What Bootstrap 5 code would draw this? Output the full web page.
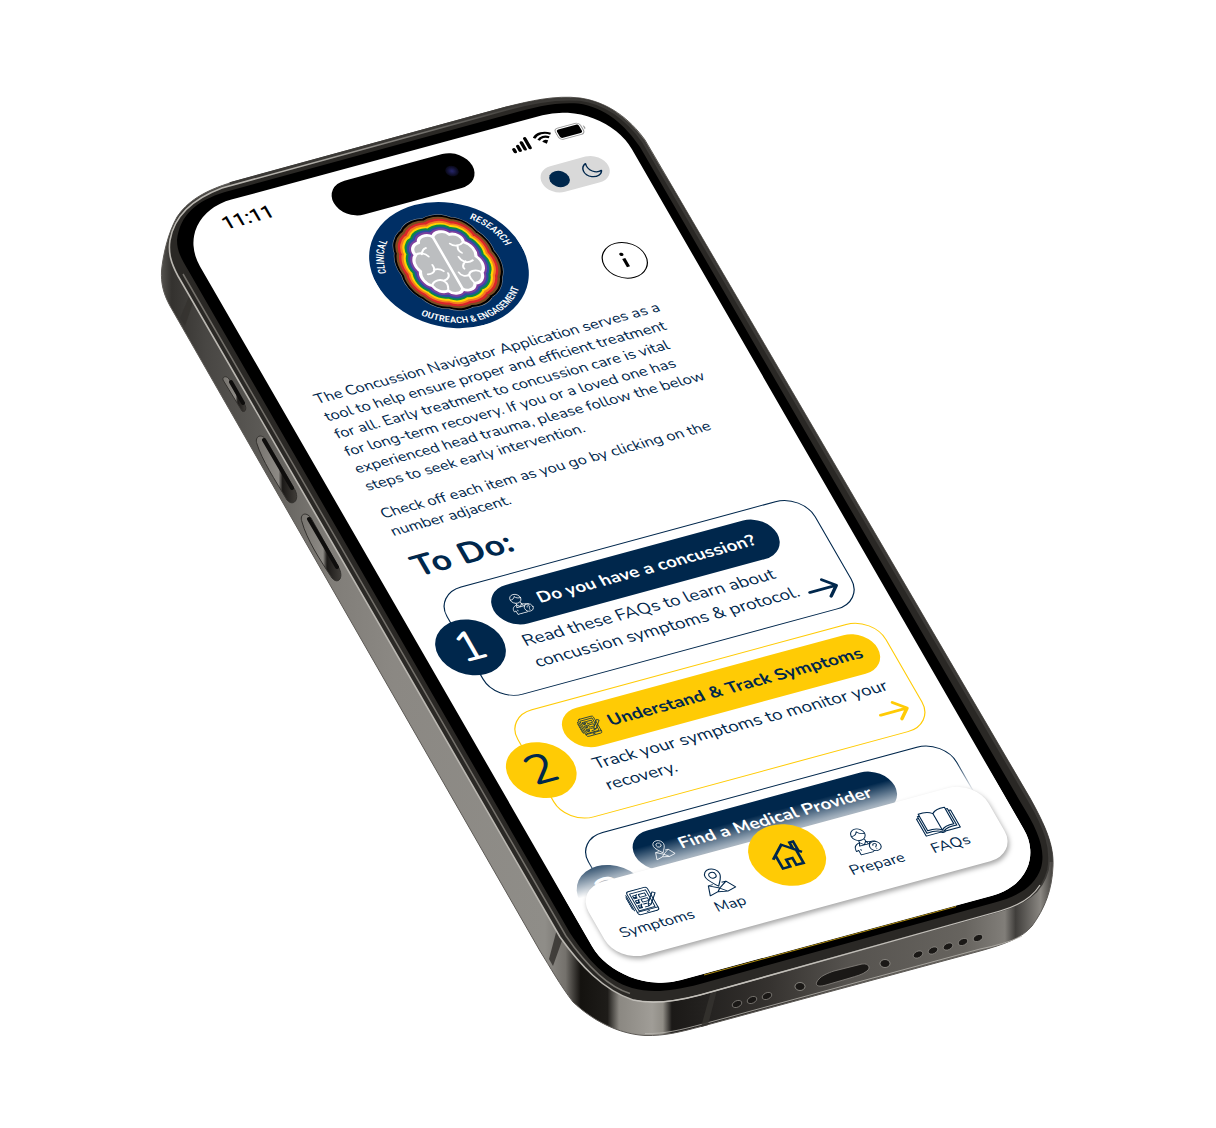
<!DOCTYPE html>
<html lang="en">
<head>
<meta charset="utf-8">
<meta name="viewport" content="width=device-width, initial-scale=1">
<title>Concussion Navigator</title>
<link href="https://cdn.jsdelivr.net/npm/bootstrap@5.3.0/dist/css/bootstrap.min.css" rel="stylesheet">
<style>
:root{--navy:#00274c;--maize:#ffcb05}
body{background:#fff;color:var(--navy);font-family:Nunito,Lato,"Open Sans",sans-serif}
.stage{position:relative;width:1216px;height:1128px;flex:none}
.handset{position:absolute;inset:0;width:100%;height:100%}
/* the display is laid out flat, then tilted onto the handset */
.display{position:absolute;left:0;top:0;width:393px;height:852px;border-radius:55px;background:#fff;overflow:hidden;
 transform-origin:0 0;transform:matrix(1.099,-.298,.528,.916,171,216)}
.display svg{display:block;flex:none}
.display a{color:inherit;text-decoration:none}
.statusbar,.masthead{display:grid;grid-template-columns:1fr 131px 1fr}
.statusbar{height:50px;padding-top:11px}
.clock{font:500 18px/20px Roboto,sans-serif;color:#000;padding-left:37px}
.island{width:126px;height:37px;border-radius:19px;background:#000}
.lens{width:11px;height:11px;border-radius:50%;background:radial-gradient(#26266b,#0c0c22 60%,#050508);margin-right:13px}
.status-icons{padding-right:26px;gap:3px}
.masthead{height:133px}
.modeswitch{width:60px;height:28px;border-radius:14px;background:#d9d9d9;padding:0 6px 0 7px;border:0}
.modeswitch i{width:17px;height:17px;border-radius:50%;background:var(--navy)}
.infobtn{width:38px;height:38px;border:1px solid #000;border-radius:50%;background:none;padding:0;margin-right:11px}
.side-tools{padding:0 26px 6px 0}
.intro{padding:18px 20px 0 30px;font-size:14px;line-height:19px;white-space:nowrap}
.intro p{margin:0 0 11px}
.todo-title{font-size:30px;line-height:40px;font-weight:700;margin:0 0 9px 31px}
.steps{padding:0 22px 0 35px;margin:0;list-style:none}
.step{position:relative;height:118px;border:1px solid var(--navy);border-radius:25px;padding:9px 0 0 39px;margin-bottom:16px;white-space:nowrap}
.step.alt{border-color:var(--maize)}
.pill{height:42px;border-radius:21px;background:var(--navy);padding:0 21px 0 14px;gap:6px;font-weight:700;font-size:16px}
.alt .pill{background:var(--maize);padding-right:14px}
.display .pill{color:#fff}.display .alt .pill{color:var(--navy)}
.step p{margin:5px 0 0 9px;font-size:16px;line-height:23px}
.tick{position:absolute;left:-25px;top:30px;width:58px;height:58px;border-radius:50%;border:0;padding:0;background:var(--navy);color:#fff;font-size:42px;line-height:58px;text-align:center}
.alt .tick{background:var(--maize);color:var(--navy)}
.go{position:absolute;right:12px;bottom:10px;color:var(--navy)}
.display .alt .go{color:var(--maize)}
.fade-veil{position:absolute;left:0;right:0;bottom:0;height:136px;background:linear-gradient(rgba(255,255,255,0),#fff 33px)}
.tabs{position:absolute;left:13px;right:16px;bottom:33px;height:80px;border-radius:25px;background:#fff;padding:0 15px;box-shadow:0 3px 5px rgba(0,0,0,.35);font-size:14px;line-height:18px}
.tabs a{flex:1 1 0;min-width:0;gap:3px;padding-bottom:17px}
.homebtn{width:64px;height:64px;border-radius:50%;background:var(--maize);margin:-26px 0 10px}
.tabs .homewrap{padding:0}
.seal text{font:500 9px "Liberation Sans Narrow","Roboto Condensed",Roboto,sans-serif;fill:#fff}
</style>
</head>
<body>
<svg width="0" height="0" class="position-absolute" aria-hidden="true">
 <symbol id="i-person" viewBox="0 0 24 26"><g fill="none" stroke="currentColor" stroke-width=".8" stroke-linejoin="round" stroke-linecap="round">
  <circle cx="10" cy="6.500" r="5.600"/><path d="M4.600 6.600C7 7 9 5.500 10 3.500C11 5.800 13 6.800 15.500 6.600M8 12V14L10.500 17L13 14V12M8 13.500L6.500 17L10.500 17L14 17L13 13.500M7 14C3.500 15 2 17 2 20V21L4 20.500V25H14.500M6 20V21M13 14L17 15.500"/><circle cx="18" cy="20.500" r="4.500"/><path d="M16.500 19.500C16.500 17.600 19.600 17.800 19.400 19.500C19.200 20.500 18 20.500 18 21.700M18 23.200V23.300M14.500 17.500C15 15.500 18 14.500 20 16.300"/></g></symbol>
 <symbol id="i-tablet" viewBox="0 0 26 26"><g fill="none" stroke="currentColor" stroke-width=".85" stroke-linejoin="round" stroke-linecap="round">
  <rect x="3" y="1" width="18" height="24" rx="2"/><path d="M5 3.500H19V21H5ZM3 22H21M11 23.500H13M1.500 4V20M.5 6V18"/><path d="M6.500 6H9V9H6.500ZM6.500 11H9V14H6.500ZM6.500 16H9V19H6.500ZM7 7.500L8 8.500L10 5.500M7 12.500L8 13.500L10 10.500M7 17.500L8 18.500L10 15.500M11.500 6H17V9H11.500ZM11.500 11H17V14H11.500ZM11.500 16H14M11.500 19H14"/><path d="M23 7L25 8.500L17 18L14.500 19L15 16.500ZM15 16.500L17 18"/></g></symbol>
 <symbol id="i-map" viewBox="0 0 28 28"><g fill="none" stroke="currentColor" stroke-width=".95" stroke-linejoin="round">
  <path d="M13 20C10 15.500 6.500 12 6.500 8A6.500 6.500 0 0 1 19.500 8C19.500 12 16 15.500 13 20Z"/><circle cx="13" cy="8" r="3"/><path d="M9 17H5L2 27L10 25L18 27L26 25L21 17H17M5 17L13 22L10 25M13 22L21 17M13 22L18 27"/></g></symbol>
 <symbol id="i-book" viewBox="0 0 32 26"><g fill="none" stroke="currentColor" stroke-width="1" stroke-linejoin="round">
  <path d="M16 5C13 2 9 1.500 4.500 2V19.500C9 19 13 19.500 16 22.500C19 19.500 23 19 27.500 19.500V2C23 1.500 19 2 16 5V22.500"/><path d="M4.500 4H2.800V21.500C8 21 12 21.500 15 23.500H17C20 21.500 24 21 29.200 21.500V4H27.500M2.800 6H1V24H14C15 25 17 25 18 24H31V6H29.200"/></g></symbol>
 <symbol id="i-home" viewBox="0 0 32 32"><path fill="none" stroke="currentColor" stroke-width="2.600" d="M2 17L16 4L30 17M24 11.500V4H27.500V14.500M6 14V28.500H13V20.500H19V28.500H26V14"/></symbol>
 <symbol id="i-arrow" viewBox="0 0 28 24"><path fill="none" stroke="currentColor" stroke-width="2.800" stroke-linecap="round" stroke-linejoin="round" d="M2 12H26M17 3L26 12L17 21"/></symbol>
</svg>

<main class="d-flex justify-content-center min-vh-100">
<div class="stage">
 <svg class="handset" viewBox="0 0 1216 1128" aria-hidden="true">
  <defs>
   <linearGradient id="steel" gradientUnits="userSpaceOnUse" x1="161" y1="0" x2="1054" y2="0">
    <stop offset="0" stop-color="#55534f"/><stop offset=".012" stop-color="#34322f"/><stop offset=".05" stop-color="#484643"/><stop offset=".11" stop-color="#5b5955"/><stop offset=".19" stop-color="#807d78"/><stop offset=".26" stop-color="#8b8883"/><stop offset=".43" stop-color="#8f8d88"/><stop offset=".453" stop-color="#74716c"/><stop offset=".47" stop-color="#14120f"/><stop offset=".50" stop-color="#1e1c19"/><stop offset=".513" stop-color="#8b8882"/><stop offset=".55" stop-color="#a09d97"/><stop offset=".562" stop-color="#908d86"/><stop offset=".572" stop-color="#1b1917"/><stop offset=".62" stop-color="#262422"/><stop offset=".68" stop-color="#35322f"/><stop offset=".77" stop-color="#56534f"/><stop offset=".90" stop-color="#67645f"/><stop offset=".945" stop-color="#817e79"/><stop offset=".957" stop-color="#403e3b"/><stop offset=".985" stop-color="#8a8782"/><stop offset="1" stop-color="#3c3a37"/>
   </linearGradient>
   <linearGradient id="rim" gradientUnits="userSpaceOnUse" x1="360" y1="640" x2="800" y2="400">
    <stop offset="0" stop-color="#bbb8b2"/><stop offset=".35" stop-color="#b4b1ab"/><stop offset=".8" stop-color="#3d3b38"/></linearGradient>
   <linearGradient id="slot" x1="0" y1="0" x2="1" y2="0"><stop offset="0" stop-color="#77746f"/><stop offset=".55" stop-color="#8d8a85"/><stop offset=".65" stop-color="#1c1a18"/><stop offset="1" stop-color="#403d39"/></linearGradient>
  </defs>
  <path fill="url(#steel)" stroke="#5d5a56" d="M161.500 271C163 255 168 233 177 217C187 202 203 191 233 182L506 107C530 101 555 95 580 98C608 102 630 119 645 140L1030 798C1045 825 1054 845 1053 866C1052 890 1045 908 1032 926C1022 938 1005 944 980 951L703 1026C680 1032 665 1036 645 1035.500C618 1034 592 1020 573 1002C560 985 550 967 540 951L170 306C163 293 161 283 161.500 271Z"/>
  <path fill="none" stroke="#3b3936" stroke-width="3.500" d="M230 184L506 108.500C530 102.500 555 97 580 100C607 104 628 121 643 141L1028.500 799C1043 825 1052 845 1051 862"/>
  <path fill="none" stroke="#b9b6b0" stroke-width=".8" d="M1022 936C1010 942 995 946 980 949L703 1024C680 1030 665 1034 645 1033.500"/>
  <path fill="#35332f" opacity=".85" d="M190 294L194 300L185 326L180 318ZM557 929L563 938L553 966L549 959ZM711 991L717 990L708 1025L701 1027Z"/>
  <path fill="#2a2825" stroke="url(#rim)" stroke-width="1.600" d="M170 240C174 217 190 200 222 188L506 110C530 103 555 98 580 100C608 104 628 121 643 142L1029 801C1045 828 1052 848 1048 870C1042 893 1025 904 1000 911L700 995C670 1003 650 1004 633 1000C603 990 580 965 560 937L178 276C171 263 168 253 170 240Z"/>
  <path fill="none" stroke="#c4c1bb" stroke-width="1.200" d="M1040 885C1032 898 1018 906 1000 911L700 995C670 1003 650 1004 633 1000"/>
  <path fill="none" stroke="#74716b" stroke-width="1.500" d="M630 993.500C605 986 584 962 566 936L183 274"/>
  <path fill="#000" d="M177 240C180 215 196 201 225 192L510 114C535 107 555 102 578 103.500C605 107 625 125 640 147L1021 803C1038 830 1046 850 1041 868C1035 886 1018 897 993 903L700 984C670 992 650 993 632 988C606 980 588 960 570 933L184 263C179 254 177 248 177 240Z"/>
  <g stroke="#33312e" stroke-width="1">
   <path fill="url(#slot)" d="M223 380C222 377 226 375 229 379L245 405C247 409 245 413 242 411Z"/>
   <path fill="url(#slot)" d="M257 444C254 436 262 433 266 440L295 490C300 500 293 507 287 500C275 480 262 460 257 444Z"/>
   <path fill="url(#slot)" d="M302 522C299 514 306 511 311 518L339 568C344 578 338 585 332 578C320 560 307 540 302 522Z"/>
  </g>
  <path fill="none" stroke="#0e0d0c" stroke-width="4" stroke-linecap="round" d="M231 382L243 403M264 440L292 488M309 519L337 567"/>
  <g fill="#1a1816" stroke="#9b9892" stroke-width=".8">
   <path stroke="#8a8782" d="M819 979C821 976 828 973 834 971L862 964C869 963 871 968 867 971C862 975 856 976 850 978L826 985C816 988 814 984 819 979Z"/>
   <ellipse cx="800" cy="986.500" rx="5" ry="4"/><ellipse cx="885" cy="963.500" rx="5" ry="4"/>
   <g stroke-width=".6"><ellipse cx="737" cy="1004" rx="5" ry="3.200" transform="rotate(-25 737 1004)"/><ellipse cx="752" cy="1000" rx="5" ry="3.200" transform="rotate(-25 752 1000)"/><ellipse cx="767" cy="996" rx="5" ry="3.200" transform="rotate(-25 767 996)"/>
   <ellipse cx="918" cy="954.500" rx="5" ry="3.200" transform="rotate(-25 918 954.500)"/><ellipse cx="933" cy="950.500" rx="5" ry="3.200" transform="rotate(-25 933 950.500)"/><ellipse cx="948" cy="946.500" rx="5" ry="3.200" transform="rotate(-25 948 946.500)"/><ellipse cx="963" cy="942" rx="5" ry="3.200" transform="rotate(-25 963 942)"/><ellipse cx="978" cy="938" rx="5" ry="3.200" transform="rotate(-25 978 938)"/></g>
  </g>
  <path stroke="#d9ae14" stroke-width="1" opacity=".8" d="M704 975L956 906.500"/>
 </svg>

 <div class="display">
  <div class="statusbar">
   <div class="clock">11:11</div>
   <div class="island d-flex align-items-center justify-content-end mx-auto"><span class="lens"></span></div>
   <div class="status-icons d-flex align-items-start justify-content-end">
    <svg width="19" height="20" viewBox="0 0 19 20"><path d="M2 14V16.500M6.500 12V16.500M11 9.500V16.500M15.500 6.500V16.500" stroke="#000" stroke-width="3" stroke-linecap="round"/></svg>
    <svg width="17" height="20" viewBox="0 0 17 20"><path d="M1 8.500A11 11 0 0 1 16 8.500M3.700 11.500A7 7 0 0 1 13.300 11.500" fill="none" stroke="#000" stroke-width="2.200"/><path d="M8.500 17L5.800 14A4 4 0 0 1 11.200 14Z"/></svg>
    <svg width="27" height="20" viewBox="0 0 27 20"><rect x=".5" y="5" width="23" height="12" rx="3.500" fill="none" stroke="#999"/><rect x="2" y="6.500" width="20" height="9" rx="2"/><path d="M25 9V13C26.500 12.500 26.500 9.500 25 9Z" fill="#999"/></svg>
   </div>
  </div>

  <header class="masthead">
   <svg class="seal" style="grid-column:2" width="131" height="133" viewBox="0 -2 131 133" role="img" aria-label="Clinical Research Outreach and Engagement">
    <defs>
     <path id="arcTop" d="M12 65.500A53.500 53.500 0 0 1 119 65.500"/><path id="arcLow" d="M5.500 65.500A60 60 0 0 0 125.500 65.500"/>
     <path id="brain" d="M0-33C4-38 14-37 16-31C23-31 27-25 25-20C31-16 32-8 29-3C33 3 31 11 26 14C25 20 20 24 14 23C11 29 3 29 0 25C-3 29-11 29-14 23C-20 24-25 20-26 14C-31 11-33 3-29-3C-32-8-31-16-25-20C-27-25-23-31-16-31C-14-37-4-38 0-33Z"/>
    </defs>
    <circle cx="65.500" cy="65.500" r="65.500" fill="#002f65"/>
    <g transform="translate(65.500 67) scale(.87 .98)" stroke-linejoin="round">
     <use href="#brain" stroke="#8a8f96" stroke-width="37"/><use href="#brain" stroke="#000" stroke-width="36"/><use href="#brain" stroke="#7b4e22" stroke-width="32"/><use href="#brain" stroke="#d9252a" stroke-width="27.500"/><use href="#brain" stroke="#f47b20" stroke-width="23"/><use href="#brain" stroke="#ffd400" stroke-width="19"/><use href="#brain" stroke="#0a8a43" stroke-width="15"/><use href="#brain" stroke="#2b4ea2" stroke-width="11"/><use href="#brain" stroke="#7b3f9d" stroke-width="7"/>
     <use href="#brain" fill="#bcbec0" stroke="#fff" stroke-width="3"/>
     <g fill="none" stroke="#fff" stroke-width="1.900" stroke-linecap="round"><path stroke-width="2.600" d="M0-33V25"/><path d="M-25-20C-20-22-15-19-14-15M-19-19C-17-22-14-24-12-24M-24 2C-18 3-14 0-15-6M-16-1C-12-1-9 1-8 3M-26 14C-22 9-14 9-12 14C-10 18-14 22-14 23M-12 12C-8 12-5 9-5 6M25-20C20-17 14-18 12-22M18-18C16-15 16-12 18-10M24 0C18 2 13-1 13-7M17-1C13 1 11 4 12 6M26 14C22 8 14 10 13 14C12 18 14 21 14 23M13 13C9 14 5 12 5 8"/></g>
    </g>
    <text text-anchor="middle"><textPath href="#arcTop" startOffset="15%">CLINICAL</textPath></text>
    <text text-anchor="middle"><textPath href="#arcTop" startOffset="86%">RESEARCH</textPath></text>
    <text text-anchor="middle"><textPath href="#arcLow" startOffset="50%">OUTREACH &amp; ENGAGEMENT</textPath></text>
   </svg>
   <div class="side-tools d-flex flex-column align-items-end justify-content-between">
    <button class="modeswitch d-flex align-items-center justify-content-between" aria-label="Dark mode"><i></i>
     <svg width="18" height="18" viewBox="0 0 18 18"><path d="M7 1.500C1 4 0 12 6 15.500C10 17.500 15 16 16.500 12C11 14 5 9 7 1.500Z" fill="none" stroke="#00274c" stroke-width="1.200" stroke-linejoin="round"/></svg></button>
    <button class="infobtn d-flex align-items-center justify-content-center" aria-label="Information"><svg width="8" height="18" viewBox="0 0 8 18"><path d="M4 7V16" stroke="#000" stroke-width="2.800"/><circle cx="4" cy="2.500" r="1.700"/></svg></button>
   </div>
  </header>

  <section class="intro">
   <p>The Concussion Navigator Application serves as a<br>tool to help ensure proper and efficient treatment<br>for all. Early treatment to concussion care is vital<br>for long-term recovery. If you or a loved one has<br>experienced head trauma, please follow the below<br>steps to seek early intervention.</p>
   <p>Check off each item as you go by clicking on the<br>number adjacent.</p>
  </section>

  <h1 class="todo-title">To Do:</h1>
  <ol class="steps">
   <li class="step"><button class="tick">1</button>
    <a href="#faqs" class="pill d-inline-flex align-items-center"><svg width="20" height="22"><use href="#i-person"/></svg>Do you have a concussion?</a>
    <p>Read these FAQs to learn about<br>concussion symptoms &amp; protocol.</p>
    <a href="#faqs" class="go" aria-label="Open"><svg width="28" height="24"><use href="#i-arrow"/></svg></a></li>
   <li class="step alt"><button class="tick">2</button>
    <a href="#symptoms" class="pill d-inline-flex align-items-center"><svg width="20" height="22"><use href="#i-tablet"/></svg>Understand &amp; Track Symptoms</a>
    <p>Track your symptoms to monitor your<br>recovery.</p>
    <a href="#symptoms" class="go" aria-label="Open"><svg width="28" height="24"><use href="#i-arrow"/></svg></a></li>
   <li class="step"><button class="tick">3</button>
    <a href="#map" class="pill d-inline-flex align-items-center"><svg width="20" height="22"><use href="#i-map"/></svg>Find a Medical Provider</a></li>
  </ol>

  <div class="fade-veil"></div>
  <nav class="tabs d-flex">
   <a href="#symptoms" class="d-flex flex-column align-items-center justify-content-end"><svg width="27" height="27"><use href="#i-tablet"/></svg>Symptoms</a>
   <a href="#map" class="d-flex flex-column align-items-center justify-content-end"><svg width="28" height="28"><use href="#i-map"/></svg>Map</a>
   <a href="#home" class="homewrap d-flex flex-column align-items-center justify-content-center" aria-label="Home"><span class="homebtn d-flex align-items-center justify-content-center"><svg width="30" height="30"><use href="#i-home"/></svg></span></a>
   <a href="#prepare" class="d-flex flex-column align-items-center justify-content-end"><svg width="26" height="28"><use href="#i-person"/></svg>Prepare</a>
   <a href="#faqs" class="d-flex flex-column align-items-center justify-content-end"><svg width="33" height="27"><use href="#i-book"/></svg>FAQs</a>
  </nav>
 </div>
</div>
</main>
<script src="https://cdn.jsdelivr.net/npm/bootstrap@5.3.0/dist/js/bootstrap.bundle.min.js"></script>
</body>
</html>
